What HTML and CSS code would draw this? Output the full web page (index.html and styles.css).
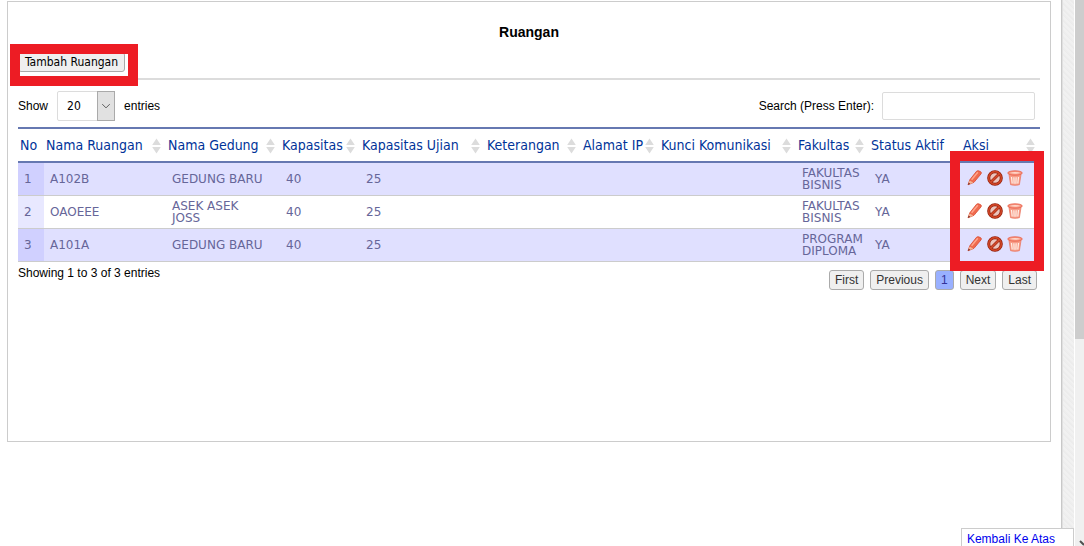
FILE: index.html
```html
<!DOCTYPE html>
<html lang="id">
<head>
<meta charset="utf-8">
<title>Ruangan</title>
<link rel="stylesheet" href="styles.css">
</head>
<body>
<svg class="defs" aria-hidden="true">
  <defs>
    <symbol id="pencil" viewBox="0 0 16 16">
      <path d="M1 14.800l1.800-5L9.600 1.200q.8-.8 2-.4l2.200 1q1 .8.300 2L7 12.300z" fill="#ef6a4e" stroke="#d9482f" stroke-width=".8"/>
      <path d="M4.600 9.800L10.800 2.200" stroke="#ffa58c" stroke-width="1.500"/>
      <path d="M1 14.800l1.600-4.400 3.800 2.300z" fill="#f3b596"/>
      <path d="M.8 15l.8-2.200 1.800 1z" fill="#7b2a20"/>
    </symbol>
    <symbol id="ban" viewBox="0 0 16 16">
      <circle cx="8" cy="8" r="6.300" fill="#ecc4bc" stroke="#8e1d0a" stroke-width="3"/>
      <circle cx="8" cy="8" r="6.300" fill="none" stroke="#cf4526" stroke-width="1.700"/>
      <path d="M4.200 11.800l7.600-7.600" stroke="#a52a12" stroke-width="2.800"/>
      <path d="M3.700 12.300l8.600-8.600" stroke="#d24b2c" stroke-width="1.500"/>
    </symbol>
    <symbol id="trash" viewBox="0 0 16 16">
      <path d="M2 4.500h12l-1.600 10.200q-4.400 1.300-8.800 0z" fill="#f79d88" stroke="#e8705a" stroke-width=".7"/>
      <path d="M4.500 7l.7 6.500M6.900 7.300l.2 6.500M9.100 7.300l-.2 6.500M11.500 7l-.7 6.500" stroke="#fff0e8" stroke-width="1.200"/>
      <ellipse cx="8" cy="3" rx="7.300" ry="2.300" fill="#f58c76" stroke="#e8604a" stroke-width=".7"/>
      <path d="M2.300 3q5.700-2 11.400 0q-5.700 1.400-11.400 0z" fill="#ffd9cb"/>
    </symbol>
    <symbol id="sort" viewBox="0 0 9 16"><path d="M4.500 0.500L8.800 7H.2zM4.500 15.500L8.800 9H.2z" fill="#dcdcdc"/></symbol>
  </defs>
</svg>
<div class="page">
  <main class="sheet">
    <section class="panel">
      <h1 class="title">Ruangan</h1>
      <div class="toolbar">
        <div class="marked">
          <button class="btn add" type="button">Tambah Ruangan</button>
          <span class="mark mark-add"></span>
        </div>
      </div>
      <div class="controls">
        <div class="length">
          <label for="len">Show</label>
          <span class="select"><select id="len"><option>20</option></select><svg class="drop" viewBox="0 0 17 28" aria-hidden="true"><path d="M4.500 12l4 4 4-4" fill="none" stroke="#555"/></svg></span>
          <span>entries</span>
        </div>
        <div class="search">
          <label for="q">Search (Press Enter):</label>
          <input id="q" type="text">
        </div>
      </div>
      <div class="table-wrap">
        <table class="grid">
          <colgroup><col class="c-no"><col class="c-room"><col class="c-building"><col class="c-cap"><col class="c-exam"><col class="c-note"><col class="c-ip"><col class="c-key"><col class="c-faculty"><col class="c-status"><col class="c-action"></colgroup>
          <thead>
            <tr>
              <th>No</th>
              <th>Nama Ruangan<svg class="sort"><use href="#sort"/></svg></th>
              <th>Nama Gedung<svg class="sort"><use href="#sort"/></svg></th>
              <th>Kapasitas<svg class="sort"><use href="#sort"/></svg></th>
              <th>Kapasitas Ujian<svg class="sort"><use href="#sort"/></svg></th>
              <th>Keterangan<svg class="sort"><use href="#sort"/></svg></th>
              <th>Alamat IP<svg class="sort"><use href="#sort"/></svg></th>
              <th>Kunci Komunikasi<svg class="sort"><use href="#sort"/></svg></th>
              <th>Fakultas<svg class="sort"><use href="#sort"/></svg></th>
              <th>Status Aktif</th>
              <th>Aksi<svg class="sort"><use href="#sort"/></svg></th>
            </tr>
          </thead>
          <tbody>
            <tr><td>1</td><td>A102B</td><td class="building">GEDUNG BARU</td><td>40</td><td>25</td><td></td><td></td><td></td><td>FAKULTAS BISNIS</td><td>YA</td>
              <td><div class="actions"><a href="#edit" aria-label="Edit"><svg><use href="#pencil"/></svg></a><a href="#off" aria-label="Nonaktifkan"><svg><use href="#ban"/></svg></a><a href="#del" aria-label="Hapus"><svg><use href="#trash"/></svg></a></div></td></tr>
            <tr><td>2</td><td>OAOEEE</td><td class="building">ASEK ASEK JOSS</td><td>40</td><td>25</td><td></td><td></td><td></td><td>FAKULTAS BISNIS</td><td>YA</td>
              <td><div class="actions"><a href="#edit" aria-label="Edit"><svg><use href="#pencil"/></svg></a><a href="#off" aria-label="Nonaktifkan"><svg><use href="#ban"/></svg></a><a href="#del" aria-label="Hapus"><svg><use href="#trash"/></svg></a></div></td></tr>
            <tr><td>3</td><td>A101A</td><td class="building">GEDUNG BARU</td><td>40</td><td>25</td><td></td><td></td><td></td><td>PROGRAM DIPLOMA</td><td>YA</td>
              <td><div class="actions"><a href="#edit" aria-label="Edit"><svg><use href="#pencil"/></svg></a><a href="#off" aria-label="Nonaktifkan"><svg><use href="#ban"/></svg></a><a href="#del" aria-label="Hapus"><svg><use href="#trash"/></svg></a></div></td></tr>
          </tbody>
        </table>
        <span class="mark mark-actions"></span>
      </div>
      <div class="footer">
        <p class="info">Showing 1 to 3 of 3 entries</p>
        <nav class="pager" aria-label="Halaman">
          <button class="btn" type="button">First</button>
          <button class="btn" type="button">Previous</button>
          <button class="btn current" type="button">1</button>
          <button class="btn" type="button">Next</button>
          <button class="btn" type="button">Last</button>
        </nav>
      </div>
    </section>
  </main>
  <div class="texture"></div>
  <div class="scrollbar"><div class="thumb"></div><svg class="down" viewBox="0 0 9 6" aria-hidden="true"><path d="M5 1l4 4" stroke="#505050" stroke-width="2"/></svg></div>
</div>
<a class="to-top" href="#top">Kembali Ke Atas</a>
</body>
</html>
```
FILE: styles.css
```css
* { box-sizing: border-box; }
body {
  margin: 0;
  background: #fff;
  color: #000;
  font: 12px/16px "Liberation Sans", Arial, sans-serif;
}
.defs { position: absolute; width: 0; height: 0; }
.page { display: flex; min-height: 100vh; }
.sheet {
  flex: 1;
  min-width: 0;
  padding: 1px 10px 0 7px;
  border-right: 1px solid #c8c8c8;
}
.texture {
  width: 12px;
  border-left: 1px solid #e0e0e0;
  background: repeating-linear-gradient(45deg, #eee 0 1px, #f1f1f1 1px 3px, #ececec 3px 4px);
}
.scrollbar {
  display: flex;
  flex-direction: column;
  justify-content: space-between;
  width: 10px;
  border-left: 1px solid #fff;
  background: #f0f0f0;
}
.thumb { height: 62vh; background: #cdcdcd; }
.down { width: 9px; height: 6px; }
.panel {
  min-height: 441px;
  padding: 22px 10px 0;
  border: 1px solid #ccc;
}
.title { margin: 0; font-size: 14px; line-height: 16px; text-align: center; }
.toolbar { padding: 12px 0 6px; border-bottom: 2px solid #dcdcdc; }
.marked { position: relative; width: max-content; }
.btn {
  display: block;
  height: 20px;
  padding: 0 5px;
  border: 1px solid #aaa;
  border-radius: 3px;
  background: #efefef;
  color: #333;
  font: inherit;
}
.add {
  padding: 0 6px;
  color: #000;
  font-family: "DejaVu Sans Condensed", "DejaVu Sans", Tahoma, sans-serif;
}
.mark { position: absolute; border: 10px solid #ed1c24; pointer-events: none; }
.mark-add { inset: -8px -13px -14px -8px; }
.mark-actions { top: 24px; right: -4px; bottom: -9px; width: 94px; }
.controls {
  display: flex;
  align-items: center;
  justify-content: space-between;
  padding: 11px 5px 6px 0;
}
.length { display: flex; align-items: center; gap: 9px; }
.search { display: flex; align-items: center; gap: 8px; }
.select { position: relative; width: 58px; height: 30px; }
.select select {
  width: 100%;
  height: 100%;
  padding: 0 9px;
  border: 1px solid #dcdcdc;
  border-radius: 2px;
  appearance: none;
  background: #fff;
  color: #000;
  font: 12px "DejaVu Sans Condensed", "DejaVu Sans", sans-serif;
}
.drop {
  position: absolute;
  top: 0;
  right: 0;
  width: 18px;
  height: 30px;
  border: 1px solid #aaa;
  background: #e1e1e1;
  pointer-events: none;
}
.search input {
  width: 153px;
  height: 28px;
  border: 1px solid #dcdcdc;
  border-radius: 2px;
  font: inherit;
}
.table-wrap { position: relative; }
.grid {
  width: 100%;
  table-layout: fixed;
  border-collapse: separate;
  border-spacing: 0;
  border-top: 2px solid #6678b1;
  font: 12px/12px "DejaVu Sans", Verdana, sans-serif;
}
.c-no { width: 26px; }
.c-room { width: 122px; }
.c-building { width: 114px; }
.c-cap { width: 80px; }
.c-exam { width: 125px; }
.c-note { width: 96px; }
.c-ip { width: 78px; }
.c-key { width: 137px; }
.c-faculty { width: 73px; }
.c-status { width: 92px; }
.c-action { width: 79px; }
.grid th {
  position: relative;
  height: 34px;
  padding: 0 2px;
  border-bottom: 2px solid #6678b1;
  color: #039;
  font: 14px/16px "DejaVu Sans Condensed", "DejaVu Sans", sans-serif;
  text-align: left;
  white-space: nowrap;
}
.sort { position: absolute; top: 9px; right: 5px; width: 9px; height: 16px; }
.grid td {
  height: 33px;
  padding: 0 4px 0 6px;
  border-bottom: 1px solid #ccc;
  color: #669;
}
.grid td.building { padding-right: 16px; }
.grid tr:nth-child(odd) td { background: #e0e0ff; }
.grid tr td:first-child { background: #e8e8ff; }
.grid tr:nth-child(odd) td:first-child { background: #d0d0ff; }
.actions { display: flex; gap: 4px; padding-bottom: 2px; }
.actions svg { display: block; width: 16px; height: 16px; }
.footer { display: flex; justify-content: space-between; padding: 3px 3px 0 0; }
.info { margin: 0; }
.pager { display: flex; gap: 6px; padding-top: 5px; }
.current { background: #99b0ff; color: #339; }
.to-top {
  position: fixed;
  right: 10px;
  bottom: 0;
  padding: 4px 18px 0 5px;
  border: 1px solid #ccc;
  border-bottom: 0;
  background: #fff;
  color: #00e;
  line-height: 13px;
  text-decoration: none;
}
```
